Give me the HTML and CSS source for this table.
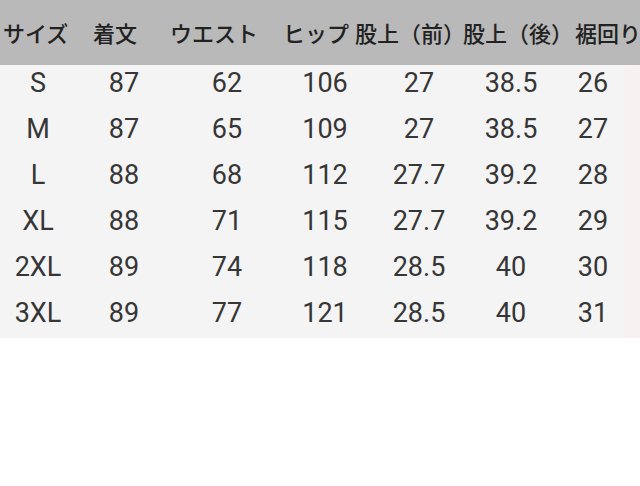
FILE: index.html
```html
<!DOCTYPE html>
<html lang="ja">
<head>
<meta charset="utf-8">
<title>サイズ表</title>
<link rel="stylesheet" href="styles.css">
</head>
<body>
<div class="sheet">
  <div class="head">
    <span class="h">サイズ</span>
    <span class="h">着文</span>
    <span class="h">ウエスト</span>
    <span class="h">ヒップ</span>
    <span class="h">股上（前）</span>
    <span class="h">股上（後）</span>
    <span class="h">裾回り</span>
  </div>
  <div class="body">
    <div class="row"><span>S</span><span>87</span><span>62</span><span>106</span><span>27</span><span>38.5</span><span>26</span></div>
    <div class="row"><span>M</span><span>87</span><span>65</span><span>109</span><span>27</span><span>38.5</span><span>27</span></div>
    <div class="row"><span>L</span><span>88</span><span>68</span><span>112</span><span>27.7</span><span>39.2</span><span>28</span></div>
    <div class="row"><span>XL</span><span>88</span><span>71</span><span>115</span><span>27.7</span><span>39.2</span><span>29</span></div>
    <div class="row"><span>2XL</span><span>89</span><span>74</span><span>118</span><span>28.5</span><span>40</span><span>30</span></div>
    <div class="row"><span>3XL</span><span>89</span><span>77</span><span>121</span><span>28.5</span><span>40</span><span>31</span></div>
  </div>
</div>
</body>
</html>
```
FILE: styles.css
```css
html, body {
  margin: 0;
  padding: 0;
  background: #ffffff;
}
.sheet {
  width: 640px;
  overflow: hidden;
}
.head {
  height: 65px;
  background: #b9b9b9;
  display: grid;
  grid-template-columns: 90px 77px 113px 72px 108px 112px 65px;
  padding-left: 3px;
  font-family: "Noto Sans CJK JP", "Noto Sans", sans-serif;
  font-weight: 500;
  font-size: 22px;
  line-height: 65px;
  color: #222222;
  white-space: nowrap;
}
.h {
  text-align: left;
}
.body {
  background: linear-gradient(to right, #f4f4f4 0, #f4f4f4 623px, #f7f1f2 626px, #f7f1f2 640px);
  height: 273px;
  font-family: Roboto, "Liberation Sans", sans-serif;
  font-size: 27px;
  color: #363636;
}
.row {
  display: grid;
  grid-template-columns: 76px 96px 110px 86px 102px 82px 82px;
  height: 46px;
  line-height: 36px;
}
.row span {
  text-align: center;
}
```
